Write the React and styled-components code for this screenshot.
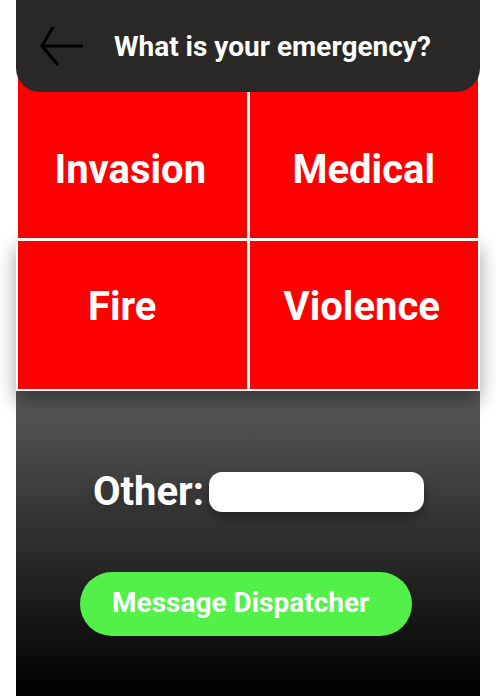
import React from 'react';
import styled, {createGlobalStyle} from 'styled-components';

const GlobalStyle = createGlobalStyle`
  html, body {
    margin: 0;
    padding: 0;
    background: #ffffff;
    font-family: Roboto, "Liberation Sans", sans-serif;
  }
`;

const Screen = styled.div`
  width: 464px;
  margin: 0 16px;
  display: flex;
  flex-direction: column;
`;

const Header = styled.header`
  position: relative;
  z-index: 3;
  height: 92px;
  background-color: #292826;
  border-radius: 0 0 24px 24px;
  display: flex;
  flex-direction: row;
  align-items: center;
  padding-left: 24px;
  box-sizing: border-box;
`;

const BackButton = styled.button`
  background: none;
  border: none;
  padding: 0;
  margin: 0 28px 0 0;
  width: 46px;
  height: 42px;
  cursor: pointer;
  display: flex;
`;

const Title = styled.h1`
  margin: 0;
  color: #ffffff;
  font-size: 28px;
  font-weight: 700;
  margin-top: 0;
`;

const Board = styled.div`
  margin-top: -32px;
  display: flex;
  flex-direction: column;
  position: relative;
  z-index: 2;
`;

const Row = styled.div`
  display: grid;
  grid-template-columns: 1fr 1fr;
  column-gap: 3px;
  background-color: #ffffff;
  padding: ${p => p.$pad};
  box-shadow: ${p => (p.$raised ? '0 10px 18px rgba(0,0,0,0.38)' : 'none')};
`;

const Cell = styled.button`
  height: ${p => p.$h}px;
  box-sizing: border-box;
  padding: ${p => p.$pad};
  border: none;
  background-color: #ff0000;
  color: #ffffff;
  font-family: Roboto, "Liberation Sans", sans-serif;
  font-weight: 700;
  font-size: 40px;
  line-height: 1;
  display: flex;
  align-items: center;
  justify-content: center;
  cursor: pointer;
`;

const Panel = styled.section`
  position: relative;
  z-index: 1;
  height: 305px;
  box-sizing: border-box;
  background: linear-gradient(180deg, #5a5a5a 0%, #000000 100%);
  display: flex;
  flex-direction: column;
  align-items: flex-start;
  padding-top: 81px;
`;

const OtherRow = styled.div`
  display: flex;
  flex-direction: row;
  align-items: center;
  gap: 5px;
  margin-left: 77px;
`;

const OtherLabel = styled.label`
  color: #ffffff;
  font-size: 40px;
  font-weight: 700;
  line-height: 1;
  text-shadow: 0 4px 10px rgba(0,0,0,0.25);
`;

const OtherInput = styled.input`
  width: 215px;
  height: 40px;
  box-sizing: border-box;
  border: none;
  border-radius: 13px;
  background: #ffffff;
  padding: 0 14px;
  font-family: Roboto, "Liberation Sans", sans-serif;
  font-size: 18px;
  outline: none;
  box-shadow: 0 6px 12px rgba(0,0,0,0.35);
`;

const DispatchButton = styled.button`
  margin: 60px 0 0 64px;
  width: 332px;
  height: 64px;
  border: none;
  border-radius: 32px;
  background-color: #53f049;
  color: #ffffff;
  font-family: Roboto, "Liberation Sans", sans-serif;
  font-weight: 700;
  font-size: 28px;
  text-align: left;
  padding: 0 0 4px 32px;
  cursor: pointer;
`;

function BackArrow(){
  return (
    <svg width="46" height="42" viewBox="0 0 46 42" fill="none">
      <path d="M2 21 H43" stroke="#000" strokeWidth="3" />
      <path d="M13 2 L2 21 L18 40" stroke="#000" strokeWidth="3" strokeLinejoin="miter" />
    </svg>
  );
}

export default function App(){
  return (
    <>
      <GlobalStyle />
      <Screen>
        <Header>
          <BackButton aria-label="back"><BackArrow /></BackButton>
          <Title>What is your emergency?</Title>
        </Header>
        <Board>
          <Row $pad="2px 2px 0 2px">
            <Cell $h={176} $pad="40px 4px 0 0">Invasion</Cell>
            <Cell $h={176} $pad="40px 0 0 0">Medical</Cell>
          </Row>
          <Row $pad="3px 2px 2px 2px" $raised>
            <Cell $h={148} $pad="0 20px 16px 0">Fire</Cell>
            <Cell $h={148} $pad="0 4px 16px 0">Violence</Cell>
          </Row>
        </Board>
        <Panel>
          <OtherRow>
            <OtherLabel>Other:</OtherLabel>
            <OtherInput type="text" />
          </OtherRow>
          <DispatchButton>Message Dispatcher</DispatchButton>
        </Panel>
      </Screen>
    </>
  );
}
